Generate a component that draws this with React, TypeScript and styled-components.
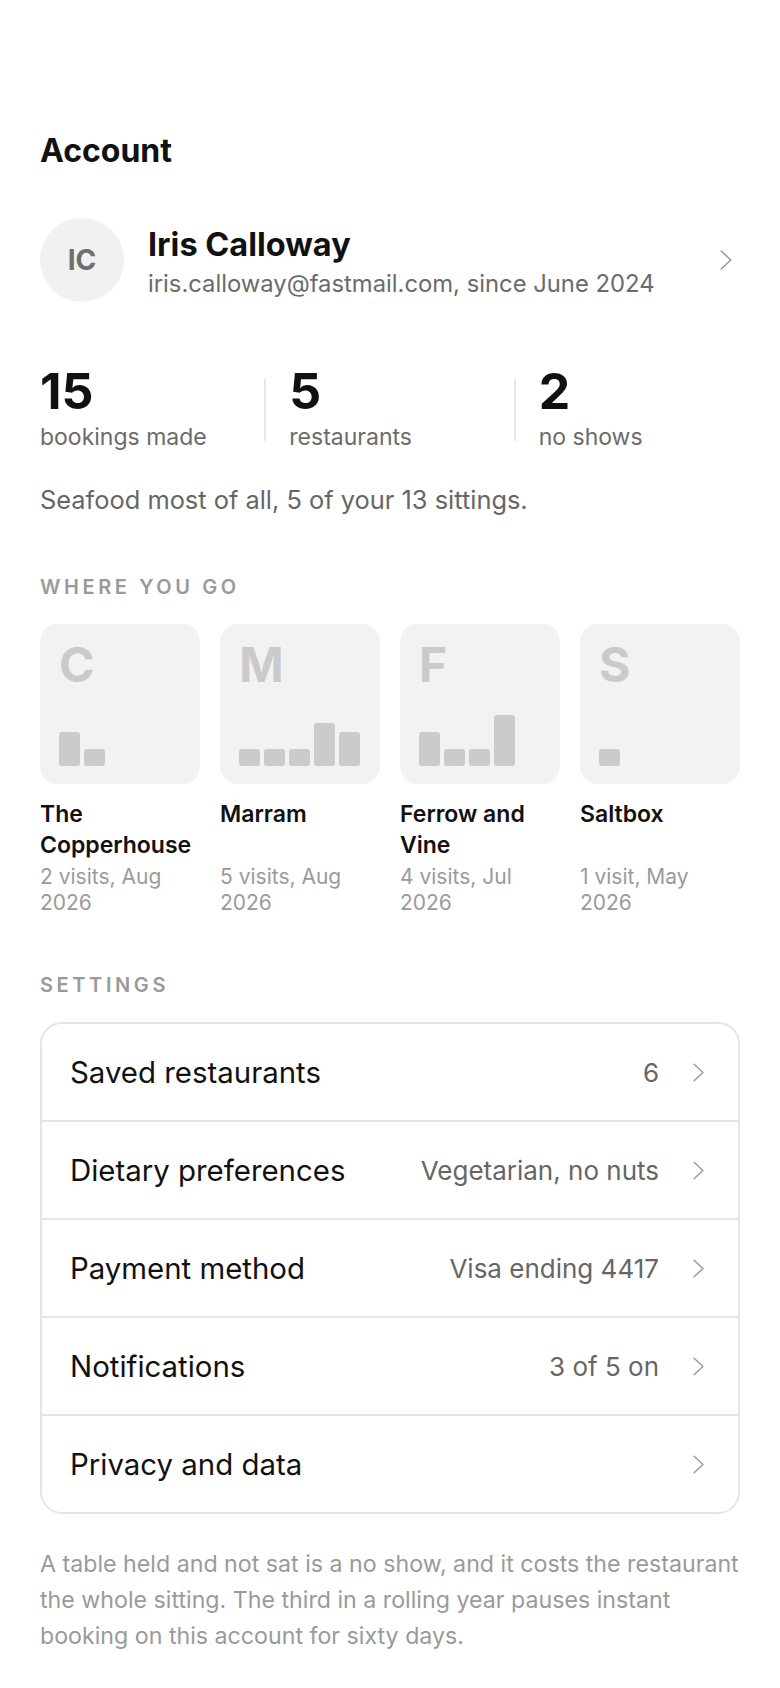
import React from "react";
import styled, {createGlobalStyle} from "styled-components";

const GlobalStyle = createGlobalStyle`
  html, body {
    margin: 0;
    padding: 0;
    background: #ffffff;
  }
  body {
    font-family: Inter, "Noto Sans", "Liberation Sans", sans-serif;
    color: #111111;
    -webkit-font-smoothing: antialiased;
  }
`;

const Page = styled.div`
  width: 780px;
  box-sizing: border-box;
  padding: 133px 40px 60px;
`;

const Title = styled.h1`
  margin: 0;
  font-size: 32px;
  line-height: 36px;
  font-weight: 700;
`;

const Profile = styled.div`
  display: flex;
  align-items: center;
  gap: 24px;
  margin-top: 49px;
`;

const Avatar = styled.div`
  width: 84px;
  height: 84px;
  border-radius: 50%;
  background: #f1f1f1;
  color: #6e6e6e;
  font-size: 28px;
  font-weight: 700;
  display: flex;
  align-items: center;
  justify-content: center;
  flex-shrink: 0;
`;

const ProfileText = styled.div`
  flex: 1;
  display: flex;
  flex-direction: column;
  gap: 4px;
  padding-top: 5px;
`;

const Name = styled.div`
  font-size: 32.5px;
  line-height: 38px;
  font-weight: 700;
`;

const Email = styled.div`
  font-size: 23.8px;
  line-height: 31px;
  color: #6b6b6b;
`;

const Chevron = styled.svg<{ $w: number; $h: number }>`
  width: ${p => p.$w}px;
  height: ${p => p.$h}px;
  flex-shrink: 0;
  color: #9a9a9a;
`;

const HeaderChevron = styled.div`
  display: flex;
  margin-right: 8px;
`;

const Stats = styled.div`
  display: flex;
  align-items: stretch;
  margin-top: 64px;
`;

const Stat = styled.div`
  flex: 1;
  display: flex;
  flex-direction: column;
  gap: 6px;
`;

const StatValue = styled.div`
  font-size: 50px;
  line-height: 50px;
  font-weight: 700;
`;

const StatLabel = styled.div`
  font-size: 23px;
  line-height: 31px;
  color: #6b6b6b;
`;

const StatDivider = styled.div`
  width: 2px;
  height: 62px;
  align-self: center;
  background: #e6e6e6;
  margin: 0 23px;
`;

const Summary = styled.p`
  margin: 31px 0 0;
  font-size: 25.4px;
  line-height: 31px;
  color: #666666;
`;

const SectionLabel = styled.div<{ $top: number }>`
  margin-top: ${p => p.$top}px;
  font-size: 20px;
  line-height: 24px;
  font-weight: 600;
  letter-spacing: 0.18em;
  text-transform: uppercase;
  color: #9a9a9a;
`;

const Places = styled.div`
  display: grid;
  grid-template-columns: repeat(4, 1fr);
  gap: 20px;
  margin-top: 25px;
`;

const Place = styled.div`
  display: flex;
  flex-direction: column;
`;

const Tile = styled.div`
  height: 160px;
  box-sizing: border-box;
  border-radius: 18px;
  background: #f2f2f2;
  padding: 17px 19px 18px;
  display: flex;
  flex-direction: column;
  justify-content: space-between;
`;

const TileLetter = styled.div`
  font-size: 48px;
  line-height: 48px;
  font-weight: 700;
  color: #cacaca;
`;

const Bars = styled.div`
  display: flex;
  align-items: flex-end;
  gap: 4px;
`;

const Bar = styled.div`
  width: 21px;
  border-radius: 3px;
  background: #cbcbcb;
`;

const PlaceName = styled.div`
  margin-top: 15px;
  min-height: 62px;
  font-size: 23px;
  line-height: 31px;
  font-weight: 600;
  color: #111111;
`;

const PlaceMeta = styled.div`
  margin-top: 3px;
  font-size: 21px;
  line-height: 26px;
  color: #9a9a9a;
`;

const SettingsCard = styled.div`
  margin-top: 25px;
  border: 2px solid #e5e5e5;
  border-radius: 22px;
  overflow: hidden;
`;

const SettingRow = styled.div`
  height: 96px;
  display: flex;
  align-items: center;
  padding: 0 34px 0 28px;
  & + & {
    border-top: 2px solid #e5e5e5;
  }
`;

const SettingLabel = styled.div`
  flex: 1;
  font-size: 29.4px;
  font-weight: 400;
  color: #111111;
`;

const SettingValue = styled.div`
  font-size: 26px;
  color: #666666;
  margin-right: 34px;
`;

const Footnote = styled.p`
  margin: 32px 0 0;
  font-size: 23.2px;
  line-height: 36px;
  color: #9a9a9a;
`;

const ChevronIcon: React.FC<{ w: number; h: number }> = ({w, h}) => (
    <Chevron $w={w} $h={h} viewBox="0 0 12 20" fill="none">
        <path d="M1.2 1 L10.8 10 L1.2 19" stroke="currentColor" strokeWidth="1.6" strokeLinecap="round"
              strokeLinejoin="round"/>
    </Chevron>
);

const places = [
    {letter: "C", name: "The Copperhouse", meta: "2 visits, Aug 2026", bars: [34, 17]},
    {letter: "M", name: "Marram", meta: "5 visits, Aug 2026", bars: [17, 17, 17, 43, 34]},
    {letter: "F", name: "Ferrow and Vine", meta: "4 visits, Jul 2026", bars: [34, 17, 17, 51]},
    {letter: "S", name: "Saltbox", meta: "1 visit, May 2026", bars: [17]},
];

const settings = [
    {label: "Saved restaurants", value: "6"},
    {label: "Dietary preferences", value: "Vegetarian, no nuts"},
    {label: "Payment method", value: "Visa ending 4417"},
    {label: "Notifications", value: "3 of 5 on"},
    {label: "Privacy and data", value: ""},
];

const stats = [
    {value: "15", label: "bookings made"},
    {value: "5", label: "restaurants"},
    {value: "2", label: "no shows"},
];

export default function App() {
    return (
        <>
            <GlobalStyle/>
            <Page>
                <Title>Account</Title>

                <Profile>
                    <Avatar>IC</Avatar>
                    <ProfileText>
                        <Name>Iris Calloway</Name>
                        <Email>iris.calloway@fastmail.com, since June 2024</Email>
                    </ProfileText>
                    <HeaderChevron>
                        <ChevronIcon w={12} h={20}/>
                    </HeaderChevron>
                </Profile>

                <Stats>
                    {stats.map((s, i) => (
                        <React.Fragment key={s.label}>
                            {i > 0 && <StatDivider/>}
                            <Stat>
                                <StatValue>{s.value}</StatValue>
                                <StatLabel>{s.label}</StatLabel>
                            </Stat>
                        </React.Fragment>
                    ))}
                </Stats>

                <Summary>Seafood most of all, 5 of your 13 sittings.</Summary>

                <SectionLabel $top={60}>Where you go</SectionLabel>
                <Places>
                    {places.map(p => (
                        <Place key={p.name}>
                            <Tile>
                                <TileLetter>{p.letter}</TileLetter>
                                <Bars>
                                    {p.bars.map((h, i) => (
                                        <Bar key={i} style={{height: h}}/>
                                    ))}
                                </Bars>
                            </Tile>
                            <PlaceName>{p.name}</PlaceName>
                            <PlaceMeta>{p.meta}</PlaceMeta>
                        </Place>
                    ))}
                </Places>

                <SectionLabel $top={57}>Settings</SectionLabel>
                <SettingsCard>
                    {settings.map(s => (
                        <SettingRow key={s.label}>
                            <SettingLabel>{s.label}</SettingLabel>
                            {s.value && <SettingValue>{s.value}</SettingValue>}
                            <ChevronIcon w={11} h={19}/>
                        </SettingRow>
                    ))}
                </SettingsCard>

                <Footnote>
                    A table held and not sat is a no show, and it costs the restaurant the whole sitting. The third
                    in a rolling year pauses instant booking on this account for sixty days.
                </Footnote>
            </Page>
        </>
    );
}
